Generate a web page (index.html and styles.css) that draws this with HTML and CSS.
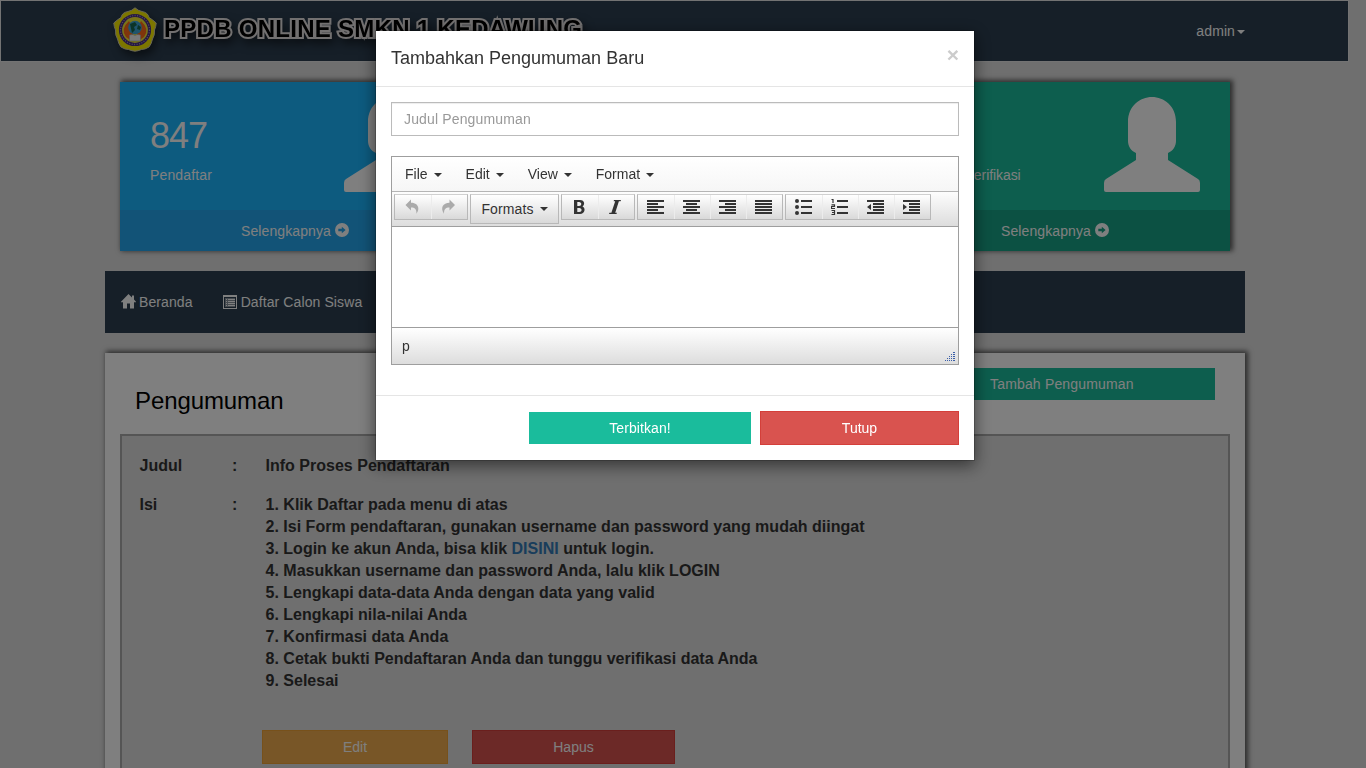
FILE: index.html
```html
<!DOCTYPE html>
<html lang="id">
<head>
<meta charset="utf-8">
<title>PPDB Online SMKN 1 Kedawung</title>
<link rel="stylesheet" href="styles.css">
</head>
<body>
<svg class="sprite" width="0" height="0">
  <symbol id="user" viewBox="0 0 96 95"><path d="M24 25C24 9 36 0 48 0s24 9 24 25v19c0 5-3 10-8 12v7l30 19q2 1 2 4v7q0 2-2 2H2q-2 0-2-2v-7q0-3 2-4l30-19v-7c-5-2-8-7-8-12z"/></symbol>
  <symbol id="go" viewBox="0 0 14 14"><path fill-rule="evenodd" d="M7 0a7 7 0 1 1 0 14A7 7 0 0 1 7 0zM3.3 5.8v2.4h3.5v2L10.600 7 6.800 3.800v2z"/></symbol>
</svg>
<div class="page">
  <header class="topbar">
    <div class="brand">
      <svg class="logo" viewBox="0 0 44 45">
        <path fill="#f8ec00" stroke="#d0ccb0" stroke-width="1" d="M22 .8Q25 3.800 29 4.500Q35 5.500 36 10.500Q39.500 12.500 43.200 16Q43 19.500 41.500 23Q42 28 39.500 32Q38.500 37 36 40Q32 42.500 28.500 42.500Q25 44 22 44.200Q19 44 15.500 42.500Q12 42.500 8 40Q5.500 37 4.500 32Q2 28 2.500 23Q1 19.500.8 16Q4.500 12.500 8 10.500Q9 5.500 15 4.500Q19 3.800 22 .8z"/>
        <circle cx="22" cy="23" r="14.500" fill="#f3e832" stroke="#4b2f86" stroke-width="3.200"/>
        <circle cx="22" cy="23" r="14.500" fill="none" stroke="#a796c4" stroke-width="1.300" stroke-dasharray="1 1.500"/>
        <path fill="#ff6a18" d="M16 14q-9 8-3 16 3 3 7 3V22zM28 14q9 8 3 16-3 3-7 3V22z"/>
        <circle cx="22" cy="20.500" r="6.800" fill="#3fa8d8"/>
        <path fill="#176950" d="M17 17l5-2 2 3-3 2 1 3-3 3zM25 18l3 2-1 3-3-1z"/>
        <path fill="#f5f5f5" stroke="#aaa" stroke-width=".6" d="M16.500 28q3-1.200 5.500.4 2.500-1.600 5.500-.4v6H16.500z"/>
      </svg>
      <span class="brand-name">PPDB ONLINE SMKN 1 KEDAWUNG</span>
    </div>
    <a class="account">admin<i class="caret"></i></a>
  </header>

  <div class="container">
    <section class="cards">
      <div class="card blue">
        <div class="card-body"><div><div class="num">847</div><div class="label">Pendaftar</div></div><svg class="person"><use href="#user"/></svg></div>
        <div class="card-foot">Selengkapnya <svg class="go"><use href="#go"/></svg></div>
      </div>
      <div class="card green">
        <div class="card-body"><div><div class="num">&nbsp;</div><div class="label verified">Sudah Diverifikasi</div></div><svg class="person"><use href="#user"/></svg></div>
        <div class="card-foot">Selengkapnya <svg class="go"><use href="#go"/></svg></div>
      </div>
    </section>

    <nav class="menu">
      <a><svg width="15" height="15" viewBox="0 0 15 15"><path d="M7.500 0 11 3.500V1.500h2v4L15 7.800v.4H13V14.500H9V9.500H6v5H2V8.200H0v-.4z"/></svg>Beranda</a>
      <a><svg width="14" height="14" viewBox="0 0 14 14"><path fill-rule="evenodd" d="M0 0h14v14H0zM1 2v11h12V2z"/><path d="M2 3h10v9H2z" opacity=".45"/><path d="M3 4h1v1H3zM5 4h7v1H5zM3 6h1v1H3zM5 6h7v1H5zM3 8h1v1H3zM5 8h7v1H5zM3 10h1v1H3zM5 10h7v1H5z"/></svg>Daftar Calon Siswa</a>
    </nav>

    <main class="panel">
      <div class="panel-head"><h1>Pengumuman</h1><a class="add">Tambah Pengumuman</a></div>
      <div class="notice">
        <div class="row"><span>Judul</span><span>:</span><span>Info Proses Pendaftaran</span></div>
        <div class="row"><span>Isi</span><span>:</span>
          <div>1. Klik Daftar pada menu di atas<br>2. Isi Form pendaftaran, gunakan username dan password yang mudah diingat<br>3. Login ke akun Anda, bisa klik <a class="link">DISINI</a> untuk login.<br>4. Masukkan username dan password Anda, lalu klik LOGIN<br>5. Lengkapi data-data Anda dengan data yang valid<br>6. Lengkapi nila-nilai Anda<br>7. Konfirmasi data Anda<br>8. Cetak bukti Pendaftaran Anda dan tunggu verifikasi data Anda<br>9. Selesai</div>
        </div>
        <div class="actions"><a class="btn edit">Edit</a><a class="btn delete">Hapus</a></div>
      </div>
    </main>
  </div>
</div>

<div class="backdrop">
  <div class="modal">
    <div class="modal-head"><h2>Tambahkan Pengumuman Baru</h2><span class="close">×</span></div>
    <div class="modal-body">
      <input class="field" type="text" placeholder="Judul Pengumuman">
      <div class="editor">
        <div class="menubar"><span>File<i class="caret"></i></span><span>Edit<i class="caret"></i></span><span>View<i class="caret"></i></span><span>Format<i class="caret"></i></span></div>
        <div class="toolbar">
          <div class="group faded">
            <b><svg viewBox="0 0 16 16"><path d="M7 .5v3.200c6.500 0 9.500 5 5.500 11 0-4.500-1.500-6.200-5.500-6.200V11.500L1.500 6z"/></svg></b>
            <b><svg viewBox="0 0 16 16"><path d="M9.500.5v3.200C3 3.700 0 8.700 4 14.700c0-4.500 1.500-6.200 5.500-6.200V11.500L15 6z"/></svg></b>
          </div>
          <div class="group formats">Formats<i class="caret"></i></div>
          <div class="group">
            <b><svg viewBox="0 0 16 16"><path fill-rule="evenodd" d="M3 1h6c5 0 5 5 2.500 6.500C15 9 14 15 9 15H3zm3.300 2v4h1.700c3 0 3-4 0-4zm0 6v4h2c3 0 3-4 0-4z"/></svg></b>
            <b><svg viewBox="0 0 16 16"><path d="M7 1h7l-.4 1.200h-1.700L8.200 13.800h1.700L9.500 15H2l.4-1.200h2L8.200 2.200H6.600z"/></svg></b>
          </div>
          <div class="group lines">
            <b><svg viewBox="0 0 17 16"><path d="M0 1h17v2H0zM0 4h11v2H0zM0 7h17v2H0zM0 10h11v2H0zM0 13h17v2H0z"/></svg></b>
            <b><svg viewBox="0 0 17 16"><path d="M0 1h17v2H0zM3 4h11v2H3zM0 7h17v2H0zM3 10h11v2H3zM0 13h17v2H0z"/></svg></b>
            <b><svg viewBox="0 0 17 16"><path d="M0 1h17v2H0zM6 4h11v2H6zM0 7h17v2H0zM6 10h11v2H6zM0 13h17v2H0z"/></svg></b>
            <b><svg viewBox="0 0 17 16"><path d="M0 1h17v2H0zM0 4h17v2H0zM0 7h17v2H0zM0 10h17v2H0zM0 13h17v2H0z"/></svg></b>
          </div>
          <div class="group lines">
            <b><svg viewBox="0 0 17 16"><path d="M6 1h11v2H6zM6 7h11v2H6zM6 13h11v2H6z"/><circle cx="2" cy="2" r="2"/><circle cx="2" cy="8" r="2"/><circle cx="2" cy="14" r="2"/></svg></b>
            <b><svg viewBox="0 0 17 16"><path d="M6 1h11v2H6zM6 7h11v2H6zM6 13h11v2H6z"/><path class="stroke" d="M.5.5h1.500V4M.5 5.800h3v1.700h-3v2h3.500M.5 11.500h3v4h-3M1 13.500h2.500"/></svg></b>
            <b><svg viewBox="0 0 17 16"><path d="M0 1h17v2H0zM6 4h11v2H6zM6 7h11v2H6zM6 10h11v2H6zM0 13h17v2H0zM4 5v6L0 8z"/></svg></b>
            <b><svg viewBox="0 0 17 16"><path d="M0 1h17v2H0zM6 4h11v2H6zM6 7h11v2H6zM6 10h11v2H6zM0 13h17v2H0zM0 5v6l4-3z"/></svg></b>
          </div>
        </div>
        <div class="canvas"></div>
        <div class="status"><span>p</span><svg width="10" height="10" viewBox="0 0 10 10"><path d="M8 0h2v1H8zM6 2h1v1H6zM8 2h2v1H8zM4 4h1v1H4zM6 4h1v1H6zM8 4h2v1H8zM2 6h1v1H2zM4 6h1v1H4zM6 6h1v1H6zM8 6h2v1H8zM0 8h1v1H0zM2 8h1v1H2zM4 8h1v1H4zM6 8h1v1H6zM8 8h2v1H8z"/></svg></div>
      </div>
    </div>
    <div class="modal-foot"><a class="publish">Terbitkan!</a><a class="btn delete dismiss">Tutup</a></div>
  </div>
</div>
</body>
</html>
```

FILE: styles.css
```css
* { box-sizing: border-box; }
html, body { height: 100%; }
body { margin: 0; overflow: hidden; background: #dedede; color: #333; font: 14px/20px "Liberation Sans", Arial, sans-serif; }
h1, h2 { margin: 0; font-weight: 400; }
svg { display: block; fill: currentColor; }
.sprite { position: absolute; }
.page { height: 768px; overflow: hidden; }
.caret { display: inline-block; border: 4px solid transparent; border-top-color: currentColor; border-bottom: 0; vertical-align: middle; margin-left: 2px; }

.topbar { width: 1349px; height: 62px; border: 1px solid #e7e7e7; background: #2c3e50; display: flex; justify-content: space-between; padding: 0 103px 0 112px; color: #fff; }
.brand { display: flex; align-items: flex-start; padding-top: 6px; }
.logo { width: 44px; height: 45px; filter: drop-shadow(3px 5px 4px rgba(0,0,0,.5)); }
.brand-name { margin: 7px 0 0 7px; font: bold 24px/30px "Liberation Sans", Arial, sans-serif; color: #000; letter-spacing: .28px; -webkit-text-stroke: 4px #e4e0e0; paint-order: stroke fill; filter: drop-shadow(3px 5px 5px rgba(0,0,0,.5)); }
.account { padding-top: 20px; letter-spacing: .1px; }

.container { width: 1140px; margin: 20px 0 0 105px; }
.cards { display: flex; justify-content: space-between; padding: 0 15px; margin-top: 20px; }
.card { width: 350px; height: 169px; color: #fff; box-shadow: 2px -1px 5px 1px rgba(0,0,0,.6); }
.card-body { height: 128px; display: flex; justify-content: space-between; padding: 15px 30px; }
.blue .card-body { background: #1ab6ff; }
.blue .card-foot { background: #24a7ee; }
.green .card-body { background: #1abc9c; }
.green .card-foot { background: #18a286; }
.num { font-size: 36px; line-height: 40px; margin-top: 19px; letter-spacing: -1px; }
.label { margin-top: 9px; letter-spacing: .15px; }
.label.verified { letter-spacing: -.08px; }
.person { width: 96px; height: 95px; }
.card-foot { height: 41px; display: flex; justify-content: center; align-items: center; gap: 4px; letter-spacing: .1px; }
.go { width: 14px; height: 14px; margin-top: -1px; }

.menu { height: 62px; margin-top: 20px; background: #2c3e50; color: #fff; display: flex; align-items: center; gap: 30px; padding: 0 16px; letter-spacing: .1px; }
.menu a { display: flex; gap: 3px; align-items: center; }
.menu a + a { gap: 4px; }
.menu a svg { margin-top: -1px; }

.panel { height: 520px; margin-top: 20px; background: #fff; box-shadow: 2px -1px 5px 1px rgba(0,0,0,.6); padding: 15px; }
.panel-head { height: 66px; display: flex; justify-content: space-between; padding: 0 15px; }
h1 { font-size: 24px; line-height: 28px; color: #000; margin-top: 19px; letter-spacing: -.1px; }
.add { width: 250px; height: 32px; padding: 6px 0 0 25px; background: #1abc9c; color: #fff; letter-spacing: .17px; }
.notice { height: 440px; border: 2px solid #aaa; background: #dedede; padding: 19px 17.500px; font: bold 16px/22px "Liberation Sans", Arial, sans-serif; letter-spacing: .01px; }
.row { display: grid; grid-template-columns: 92.500px 33.500px 1fr; margin-bottom: 17px; }
.row .link { color: #337ab7; }
.actions { display: flex; gap: 24px; padding: 21px 0 0 122.500px; }
.btn { height: 34px; border: 1px solid; font: 14px/32px "Liberation Sans", Arial, sans-serif; text-align: center; }
.btn.edit { width: 186px; color: #fff; background: #f0ad4e; border-color: #eea236; }
.btn.delete { width: 203px; color: #fff; background: #d9534f; border-color: #d43f3a; }

.backdrop { position: fixed; inset: 0; background: rgba(0,0,0,.5); display: flex; justify-content: center; align-items: flex-start; padding: 30px 16px 0 0; }
.modal { width: 600px; height: 431px; border: 1px solid rgba(0,0,0,.2); background: #fff; background-clip: padding-box; box-shadow: 0 5px 15px rgba(0,0,0,.5); }
.modal-head { height: 56px; padding: 15px; border-bottom: 1px solid #e5e5e5; display: flex; justify-content: space-between; }
h2 { font-size: 18px; line-height: 25px; }
.close { font: bold 21px/18px "Liberation Sans", Arial, sans-serif; color: #ccc; }
.modal-body { height: 309px; padding: 15px; border-bottom: 1px solid #e5e5e5; }
.field { display: block; width: 100%; height: 34px; margin-bottom: 20px; padding: 6px 12px; border: 1px solid #bbb; box-shadow: inset 0 1px 1px rgba(0,0,0,.075); font: 14px/20px "Liberation Sans", Arial, sans-serif; letter-spacing: .15px; }
.field::placeholder { color: #999; }
.editor { border: 1px solid #9e9e9e; height: 209px; }
.menubar { height: 35px; border-bottom: 1px solid #b5b5b5; background: linear-gradient(#fff, #f6f6f6); display: flex; align-items: center; gap: 24px; padding-left: 13px; }
.editor .caret { margin-left: 6px; }
.toolbar { height: 35px; border-bottom: 1px solid #9e9e9e; background: linear-gradient(#fdfdfd, #ddd); display: flex; align-items: flex-start; gap: 2px; padding: 2px; }
.group { height: 26px; border: 1px solid #b8b8b8; border-top-color: #d0d0d0; background: linear-gradient(#fff, #d9d9d9); display: flex; }
.group b { width: 36px; padding: 4px 9px 0 9px; }
.group b + b { border-left: 1px solid #ececec; padding-left: 8px; }
.group svg { width: 16px; height: 16px; }
.lines svg { width: 17px; }
.group .stroke { fill: none; stroke: currentColor; stroke-width: 1.2; }
.faded { color: #aaa; }
.formats { width: 89px; height: 30px; align-items: center; justify-content: center; letter-spacing: .1px; }
.canvas { height: 100px; }
.status { height: 37px; border-top: 1px solid #9e9e9e; background: linear-gradient(#fff, #ddd); display: flex; justify-content: space-between; padding: 8px 3px 2px 10px; }
.status svg { align-self: flex-end; color: #3b5fa8; }
.modal-foot { display: flex; justify-content: flex-end; align-items: center; gap: 9px; padding: 15px 15px 0; }
.publish { width: 222px; height: 32px; background: #1abc9c; color: #fff; text-align: center; line-height: 32px; letter-spacing: .1px; }
.btn.dismiss { width: 199px; }
```
